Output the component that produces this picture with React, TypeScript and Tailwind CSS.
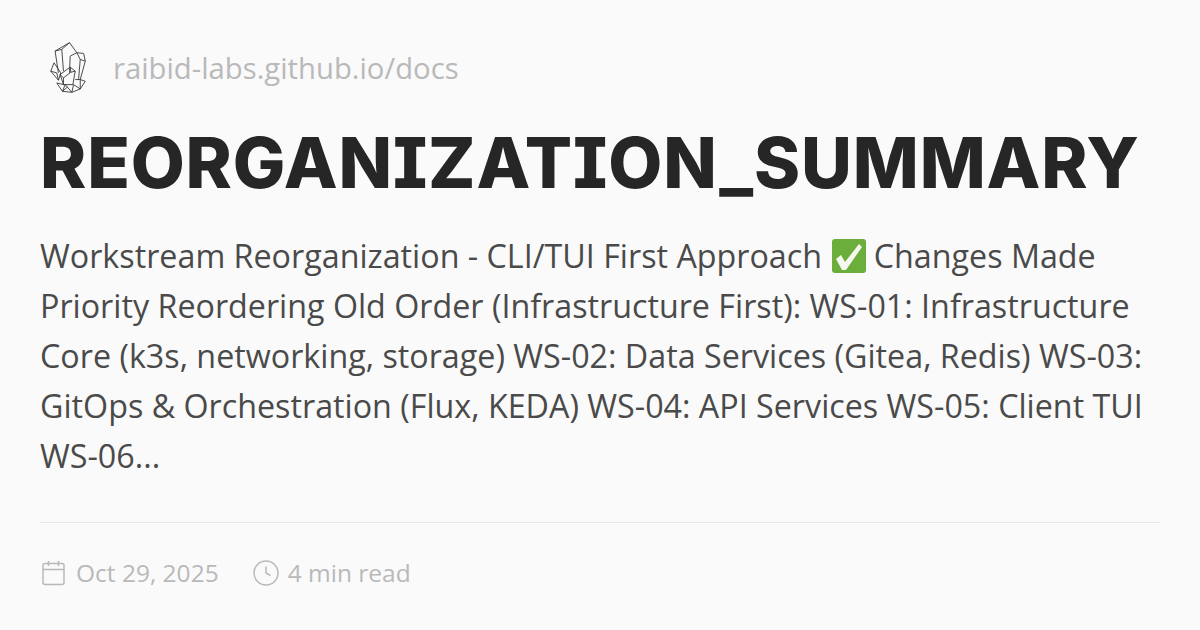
const Crystal = () => (
  <svg width="37" height="52" viewBox="60 38 110 155" fill="none" stroke="#333" strokeWidth="2.6" strokeLinejoin="round">
    <path d="M118 40L75 65L85 130M118 40L140 70L120 80L118 130M75 65L95 60L100 125M118 40L95 60" />
    <path d="M140 70L160 72L165 95L150 150L135 150M140 70L150 90L165 95M150 90L145 150" />
    <path d="M72 100L62 125L85 152L92 130L72 100ZM62 125L80 130L85 152" />
    <path d="M90 135L120 113L135 125L128 165L100 165L90 135ZM120 113L122 128L135 125M122 128L100 145L90 135M100 145L100 165" />
    <path d="M80 160L97 185L125 188L150 178L165 155L150 150M97 185L105 165L125 188L130 165L150 178L150 150M80 160L100 165M112 172L97 185" />
  </svg>
);

const CheckEmoji = () => (
  <svg width="34" height="34" viewBox="0 0 34 34" className="shrink-0 inline-block align-[-5px] ml-[2px] mr-[-1px]">
    <rect width="34" height="34" rx="3" fill="#6cae3c" />
    <path d="M4 20L9 16L13 23L27 5L30 8L14 31L10 31Z" fill="#f4f8ee" />
  </svg>
);

export default function App() {
  return (
    <div className="w-[1200px] h-[630px] overflow-hidden bg-[#fafafa] px-10 pt-[42px] font-['Open_Sans',sans-serif]">
      <div className="flex items-center gap-[26px] h-[52px] pl-[10px]">
        <Crystal />
        <span className="text-[29.25px] pt-[2px] text-[#b9b9b9]">raibid-labs.github.io/docs</span>
      </div>
      <h1 className="mt-[26px] text-[70px] leading-[86px] tracking-[0.82px] font-extrabold text-[#262626] whitespace-nowrap font-['Inter',sans-serif] [font-feature-settings:'cv08']">
        REORGANIZATION_SUMMARY
      </h1>
      <p className="mt-[25px] text-[32.25px] leading-[50px] text-[#4a4a4a]">
        Workstream Reorganization - CLI/TUI First Approach <CheckEmoji /> Changes Made<br />
        Priority Reordering Old Order (Infrastructure First): WS-01: Infrastructure<br />
        Core (k3s, networking, storage) WS-02: Data Services (Gitea, Redis) WS-03:<br />
        GitOps &amp; Orchestration (Flux, KEDA) WS-04: API Services WS-05: Client TUI<br />
        WS-06...
      </p>
      <div className="mt-[41px] border-t border-[#e8e8e8]" />
      <div className="mt-[32px] flex items-center text-[24.5px] text-[#b9b9b9]">
        <svg width="24" height="26" viewBox="0 0 24 26" fill="none" stroke="#b9b9b9" strokeWidth="1.5" className="ml-[2px]">
          <rect x="1" y="3.5" width="21" height="21" rx="2" />
          <path d="M1 9.5H22M6.5 1V6M16.500 1V6" />
        </svg>
        <span className="ml-[10px]">Oct 29, 2025</span>
        <svg width="26" height="26" viewBox="0 0 26 26" fill="none" stroke="#b9b9b9" strokeWidth="1.5" className="ml-[34px]">
          <circle cx="13" cy="13" r="12" />
          <path d="M13 6.500V13L17.500 15.500" />
        </svg>
        <span className="ml-[9px]">4 min read</span>
      </div>
    </div>
  );
}
